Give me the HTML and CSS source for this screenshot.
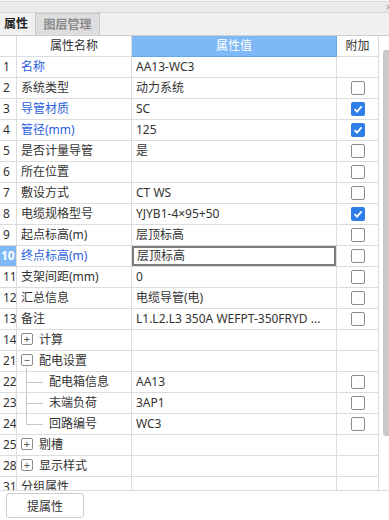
FILE: index.html
```html
<!DOCTYPE html>
<html lang="zh-CN">
<head>
  <meta charset="UTF-8" />
  <title>属性</title>
  <link rel="stylesheet" href="styles.css">
</head>
<body>
  <div class="panel">
    <div class="topline"></div>
    <div class="titlebar"><span class="close">×</span></div>
    <div class="tabs">
      <div class="tab active">属性</div>
      <div class="tab">图层管理</div>
    </div>

    <!-- property grid -->
    <div class="grid-wrap">
      <div class="grid-body">
        <table class="grid">
          <colgroup>
            <col class="c-num"><col class="c-name"><col class="c-val"><col class="c-add">
          </colgroup>
          <thead>
            <tr>
              <th></th>
              <th>属性名称</th>
              <th class="hl">属性值</th>
              <th>附加</th>
            </tr>
          </thead>
          <tbody>
            <tr><td class="num">1</td><td class="name blue">名称</td><td class="val">AA13-WC3</td><td></td></tr>
            <tr><td class="num">2</td><td class="name">系统类型</td><td class="val">动力系统</td><td><span class="chk"></span></td></tr>
            <tr><td class="num">3</td><td class="name blue">导管材质</td><td class="val">SC</td><td><span class="chk on"></span></td></tr>
            <tr><td class="num">4</td><td class="name blue">管径(mm)</td><td class="val">125</td><td><span class="chk on"></span></td></tr>
            <tr><td class="num">5</td><td class="name">是否计量导管</td><td class="val">是</td><td><span class="chk"></span></td></tr>
            <tr><td class="num">6</td><td class="name">所在位置</td><td class="val"></td><td><span class="chk"></span></td></tr>
            <tr><td class="num">7</td><td class="name">敷设方式</td><td class="val">CT WS</td><td><span class="chk"></span></td></tr>
            <tr><td class="num">8</td><td class="name">电缆规格型号</td><td class="val">YJYB1-4×95+50</td><td><span class="chk on"></span></td></tr>
            <tr><td class="num">9</td><td class="name">起点标高(m)</td><td class="val">层顶标高</td><td><span class="chk"></span></td></tr>
            <tr class="current"><td class="num">10</td><td class="name blue">终点标高(m)</td><td class="val edit">层顶标高</td><td><span class="chk"></span></td></tr>
            <tr><td class="num">11</td><td class="name">支架间距(mm)</td><td class="val">0</td><td><span class="chk"></span></td></tr>
            <tr><td class="num">12</td><td class="name">汇总信息</td><td class="val">电缆导管(电)</td><td><span class="chk"></span></td></tr>
            <tr><td class="num">13</td><td class="name">备注</td><td class="val">L1.L2.L3 350A WEFPT-350FRYD ...</td><td><span class="chk"></span></td></tr>
            <tr><td class="num">14</td><td class="name group"><span class="toggle">+</span>计算</td><td class="val"></td><td></td></tr>
            <tr><td class="num">21</td><td class="name group open"><span class="toggle">−</span>配电设置</td><td class="val"></td><td></td></tr>
            <tr><td class="num">22</td><td class="name child">配电箱信息</td><td class="val">AA13</td><td><span class="chk"></span></td></tr>
            <tr><td class="num">23</td><td class="name child">末端负荷</td><td class="val">3AP1</td><td><span class="chk"></span></td></tr>
            <tr><td class="num">24</td><td class="name child last">回路编号</td><td class="val">WC3</td><td><span class="chk"></span></td></tr>
            <tr><td class="num">25</td><td class="name group"><span class="toggle">+</span>剔槽</td><td class="val"></td><td></td></tr>
            <tr><td class="num">28</td><td class="name group"><span class="toggle">+</span>显示样式</td><td class="val"></td><td></td></tr>
            <tr><td class="num">31</td><td class="name">分组属性</td><td class="val"></td><td></td></tr>
          </tbody>
        </table>
      </div>
      <div class="scrollbar"><div class="thumb"></div></div>
    </div>

    <div class="footer">
      <button class="btn">提属性</button>
    </div>
  </div>
</body>
</html>
```

FILE: styles.css
```css
body {
  margin: 0;
  background: #ffffff;
  color: #333333;
  font-family: "Noto Sans", "Noto Sans CJK SC", sans-serif;
  font-size: 12px;
}
.panel {
  width: 389px;
  height: 520px;
  display: flex;
  flex-direction: column;
  overflow: hidden;
}
.topline {
  height: 3px;
  background: #f8f8f8;
  border-bottom: 1px solid #d9d9d9;
}
.titlebar {
  height: 10px;
  background: #ebebeb;
  border-bottom: 1px solid #d4d4d4;
  display: flex;
  justify-content: flex-end;
  align-items: center;
}
.close {
  color: #999999;
  font-size: 11px;
  line-height: 10px;
  margin-right: -3px;
}
.tabs {
  height: 22px;
  background: #f0f0f0;
  border-bottom: 1px solid #cfcfcf;
  display: flex;
}
.tab {
  font-weight: bold;
  line-height: 22px;
  font-size: 12px;
  padding: 0 5px;
  color: #8c8c8c;
  background: #dedede;
  border: 1px solid #c9c9c9;
  border-bottom: none;
  width: 53px;
  line-height: 21px;
  text-align: center;
}
.tab.active {
  width: 26px;
  color: #222222;
  background: #f0f0f0;
  border: none;
  padding: 0 5px 0 4px;
  text-align: left;
  line-height: 22px;
}

/* grid */
.grid-wrap {
  height: 454px;
  display: flex;
  border-bottom: 1px solid #dcdcdc;
}
.grid-body {
  width: 379px;
  overflow: hidden;
}
.grid {
  width: 379px;
  table-layout: fixed;
  border-collapse: separate;
  border-spacing: 0;
}
.c-num { width: 17px; }
.c-name { width: 115px; }
.c-val { width: 205px; }
.c-add { width: 42px; }
.grid th,
.grid td {
  height: 20px;
  padding: 0;
  line-height: 20px;
  border-right: 1px solid #dcdcdc;
  border-bottom: 1px solid #dcdcdc;
  white-space: nowrap;
  overflow: hidden;
  text-overflow: clip;
}
.grid th {
  font-weight: normal;
  color: #333333;
  text-align: center;
}
.grid th.hl {
  background: #7fb8f6;
  color: #ffffff;
  border-right-color: #6aa6e8;
  border-bottom-color: #6aa6e8;
}
.grid td:last-child {
  text-align: center;
}
.num {
  padding-left: 3px !important;
  font-size: 12px;
}
.name {
  padding-left: 4px !important;
}
.name.blue {
  color: #2c62de;
}
.val {
  padding-left: 4px !important;
}
.current .num {
  background: #7fb8f6;
  color: #ffffff;
  font-weight: bold;
  padding-left: 1px !important;
}
.val.edit {
  box-shadow: inset 0 0 0 2px #7b7b7b;
  padding-left: 5px !important;
}

.chk {
  display: inline-block;
  width: 12px;
  height: 12px;
  border: 1px solid #8c8c8c;
  border-radius: 2px;
  background: #ffffff;
  vertical-align: middle;
  margin-top: -2px;
  margin-left: 1px;
}
.chk.on {
  width: 14px;
  height: 14px;
  border: none;
  background: #2f7de6 url("data:image/svg+xml;utf8,<svg xmlns='http://www.w3.org/2000/svg' width='14' height='14'><path d='M3.5 7.2 L6 9.6 L10.6 4.4' fill='none' stroke='white' stroke-width='1.8'/></svg>") no-repeat center;
}

.toggle {
  display: inline-block;
  width: 10px;
  height: 10px;
  border: 1px solid #8c8c8c;
  border-radius: 2px;
  line-height: 9px;
  text-align: center;
  font-size: 11px;
  color: #555555;
  margin-right: 6px;
  vertical-align: middle;
  margin-top: -3px;
}
.group.open {
  background: linear-gradient(#c8c8c8, #c8c8c8) 9px 100% / 1px 4px no-repeat;
}
.name.child {
  padding-left: 32px !important;
  background:
    linear-gradient(#c8c8c8, #c8c8c8) 9px 0 / 1px 100% no-repeat,
    linear-gradient(#c8c8c8, #c8c8c8) 9px 50% / 17px 1px no-repeat;
}
.name.child.last {
  background:
    linear-gradient(#c8c8c8, #c8c8c8) 9px 0 / 1px 50% no-repeat,
    linear-gradient(#c8c8c8, #c8c8c8) 9px 50% / 17px 1px no-repeat;
}

.scrollbar {
  width: 10px;
  padding-top: 14px;
  display: flex;
  justify-content: flex-end;
}
.thumb {
  width: 6px;
  height: 386px;
  background: #c9c9c9;
  border-radius: 3px 0 0 3px;
}

.footer {
  padding: 2px 6px;
}
.btn {
  width: 78px;
  height: 25px;
  background: #ffffff;
  border: 1px solid #cccccc;
  border-radius: 3px;
  font-family: "Noto Sans", "Noto Sans CJK SC", sans-serif;
  font-size: 12px;
  color: #333333;
  padding: 0;
}
```
